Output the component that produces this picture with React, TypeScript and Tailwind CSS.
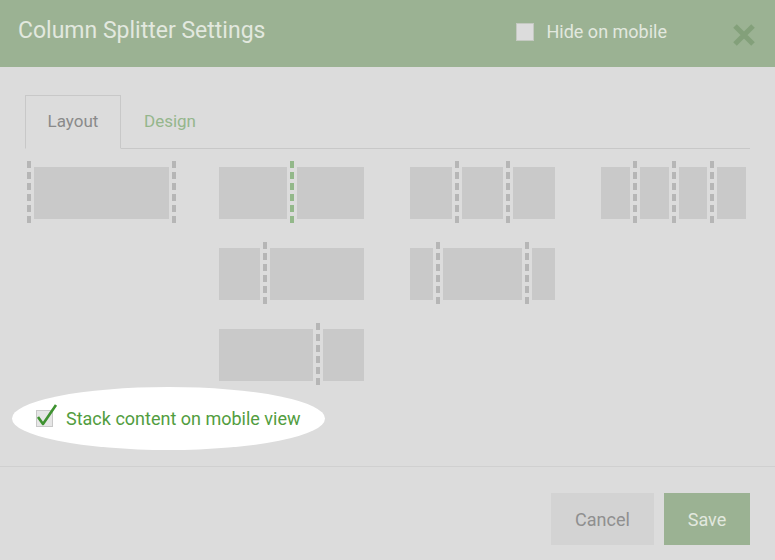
type Seg = number | 'd' | 'g';

const layouts: (Seg[] | null)[] = [
  ['d', 1, 'd'],
  [1, 'g', 1],
  [1, 'd', 1, 'd', 1],
  [1, 'd', 1, 'd', 1, 'd', 1],
  null,
  [1, 'd', 2.3],
  [1, 'd', 3.4, 'd', 1],
  null,
  null,
  [2.3, 'd', 1],
];

const Divider = ({ active }: { active?: boolean }) => (
  <div
    className={
      active
        ? 'w-[4px] mx-[3px] self-stretch bg-[repeating-linear-gradient(to_bottom,#93b88a_0_7px,transparent_7px_11px)]'
        : 'w-[4px] mx-[3px] self-stretch bg-[repeating-linear-gradient(to_bottom,#b6b6b6_0_7px,transparent_7px_11px)]'
    }
  />
);

const Tile = ({ segs, edge }: { segs: Seg[]; edge?: boolean }) => (
  <div className={`flex h-[62px] cursor-pointer ${edge ? '' : 'pl-[4px] pr-[6px]'}`}>
    {segs.map((s, i) =>
      s === 'd' || s === 'g' ? (
        <Divider key={i} active={s === 'g'} />
      ) : (
        <div key={i} className="bg-[#c9c9c9] mt-[6px] mb-[4px]" style={{ flex: s }} />
      )
    )}
  </div>
);

export default function App() {
  return (
    <div className="w-[775px] h-[560px] bg-[#dcdcdc] flex flex-col font-['Roboto',sans-serif] overflow-hidden">
      <div className="h-[67px] bg-[#9bb293] flex items-center pl-[18px] pr-[19px] shrink-0">
        <h2 className="text-[23px] text-[#e2e8df] flex-1 -mt-[4px]">Column Splitter Settings</h2>
        <label className="flex items-center gap-[12px] mr-[65px] -mt-[4px]">
          <span className="w-[18px] h-[18px] bg-[#dcdcdc] border border-[#c4c9c1]" />
          <span className="text-[18px] text-[#e2e8df]">Hide on mobile</span>
        </label>
        <svg width="24" height="24" viewBox="0 0 24 24" className="mt-[2px]">
          <path d="M3 3 L21 21 M21 3 L3 21" stroke="#83a07a" strokeWidth="5" />
        </svg>
      </div>

      <div className="px-[25px] pt-[28px] flex-1">
        <div className="flex border-b border-[#c8c8c8]">
          <div className="w-[96px] h-[54px] -mb-px border border-[#c8c8c8] border-b-[#dcdcdc] flex items-center justify-center text-[17px] text-[#8a8a8a]">
            Layout
          </div>
          <div className="h-[53px] px-[23px] flex items-center text-[17px] text-[#95b68c]">Design</div>
        </div>

        <div className="grid grid-cols-[repeat(4,155px)] gap-x-[36px] gap-y-[19px] mt-[12px] -ml-[1px]">
          {layouts.map((l, i) => (l ? <Tile key={i} segs={l} edge={i === 0} /> : <div key={i} />))}
        </div>

        <div className="relative mt-[4px] w-[313px] h-[63px] -ml-[13px]">
          <div className="absolute inset-0 rounded-[50%] bg-white" />
          <label className="relative flex items-center h-full pl-[24px] gap-[13px] -mt-[2px]">
            <span className="relative w-[17px] h-[17px] bg-[#e6e6e6] border border-[#c8c8c8]">
              <svg width="22" height="24" viewBox="0 0 22 24" className="absolute -left-[1px] -top-[8px]">
                <path d="M2 14 L7 21 L20 2" fill="none" stroke="#3e9230" strokeWidth="2.6" strokeLinejoin="round" />
              </svg>
            </span>
            <span className="text-[18px] text-[#529d40]">Stack content on mobile view</span>
          </label>
        </div>
      </div>

      <div className="border-t border-[#d0d0d0] h-[94px] flex items-start justify-end pt-[26px] pr-[25px] gap-[10px] shrink-0">
        <button className="w-[103px] h-[52px] bg-[#d3d3d3] text-[18px] text-[#8f8f8f]">Cancel</button>
        <button className="w-[86px] h-[52px] bg-[#9bb293] text-[18px] text-[#e2e8df]">Save</button>
      </div>
    </div>
  );
}
